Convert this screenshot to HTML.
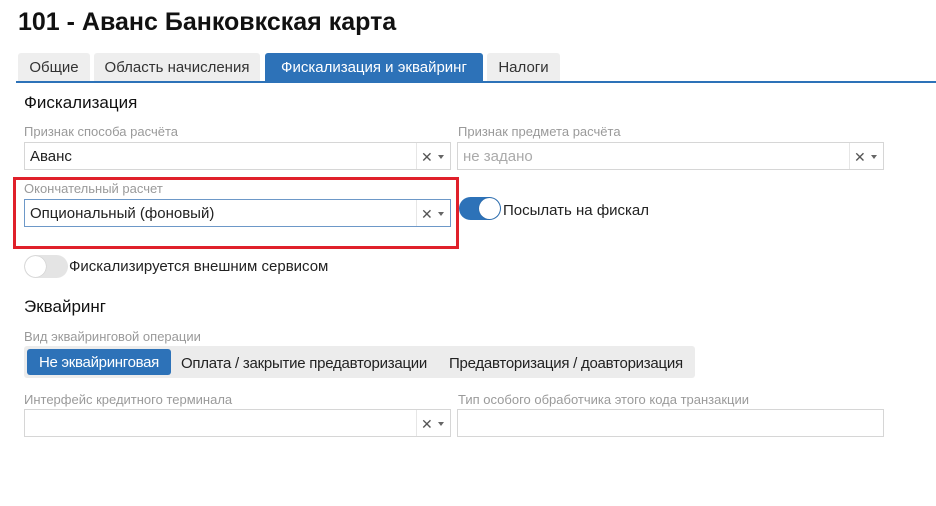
<!DOCTYPE html>
<html><head><meta charset="utf-8"><style>
*{box-sizing:border-box;margin:0;padding:0}
body{width:936px;height:506px;background:#fff;font-family:"Liberation Sans","DejaVu Sans",sans-serif;color:#222;position:relative;overflow:hidden}
.a{position:absolute;white-space:nowrap}
.tab{position:absolute;top:53px;height:29px;background:#eeeeee;font-size:15px;line-height:29px;text-align:center;color:#333;border-radius:3px 3px 0 0}
.lbl{position:absolute;font-size:13px;color:#9a9a9a}
.inp{position:absolute;height:28px;border:1px solid #d6d6d6;background:#fff;font-size:15px;line-height:28px;padding-left:5px}
.ic{position:absolute;right:0;top:0;width:34px;height:26px;border-left:1px solid #e6e6e6;font-size:14px;color:#555;line-height:26px}
.ic .x{position:absolute;left:4px;top:1px}
.ic .c{position:absolute;left:21px;top:12px;border:3px solid transparent;border-top:4px solid #666}
.tg{position:absolute;height:23px;border-radius:12px}
.tg .k{position:absolute;top:1px;width:21px;height:21px;border-radius:50%;background:#fff;box-shadow:0 0 1px rgba(0,0,0,.3)}
</style></head><body>
<div class="a" style="left:18px;top:8px;font-size:25px;font-weight:bold;color:#111">101 - Аванс Банковкская карта</div>
<div class="tab" style="left:18px;width:72px">Общие</div>
<div class="tab" style="left:94px;width:166px">Область начисления</div>
<div class="tab" style="left:265px;width:218px;background:#2d72b8;color:#fff">Фискализация и эквайринг</div>
<div class="tab" style="left:487px;width:73px">Налоги</div>
<div class="a" style="left:16px;top:81px;width:920px;height:2px;background:#2d72b8"></div>

<div class="a" style="left:24px;top:93px;font-size:17px;color:#111">Фискализация</div>
<div class="lbl" style="left:24px;top:124px">Признак способа расчёта</div>
<div class="inp" style="left:24px;top:142px;width:427px">Аванс<div class="ic"><span class="x">✕</span><span class="c"></span></div></div>
<div class="lbl" style="left:458px;top:124px">Признак предмета расчёта</div>
<div class="inp" style="left:457px;top:142px;width:427px;color:#aaa">не задано<div class="ic"><span class="x" style="color:#555">✕</span><span class="c"></span></div></div>

<div class="a" style="left:13px;top:177px;width:446px;height:72px;border:3px solid #e0202a"></div>
<div class="lbl" style="left:24px;top:181px">Окончательный расчет</div>
<div class="inp" style="left:24px;top:199px;width:427px;border-color:#6d98c8">Опциональный (фоновый)<div class="ic"><span class="x">✕</span><span class="c"></span></div></div>
<div class="tg" style="left:459px;top:197px;width:42px;background:#2d72b8"><div class="k" style="left:20px"></div></div>
<div class="a" style="left:503px;top:202px;font-size:15px">Посылать на фискал</div>
<div class="tg" style="left:24px;top:255px;width:44px;background:#e4e4e4"><div class="k" style="left:1px"></div></div>
<div class="a" style="left:69px;top:258px;font-size:15px">Фискализируется внешним сервисом</div>

<div class="a" style="left:24px;top:297px;font-size:17px;color:#111">Эквайринг</div>
<div class="lbl" style="left:24px;top:329px">Вид эквайринговой операции</div>
<div class="a" style="left:24px;top:346px;width:671px;height:32px;background:#ececec;border-radius:3px"></div>
<div class="a" style="left:27px;top:349px;width:144px;height:26px;background:#2d72b8;border-radius:3px;color:#fff;font-size:15px;line-height:28px;text-align:center;letter-spacing:-0.3px">Не эквайринговая</div>
<div class="a" style="left:181px;top:355px;font-size:15px;letter-spacing:-0.25px">Оплата / закрытие предавторизации</div>
<div class="a" style="left:449px;top:355px;font-size:15px;letter-spacing:-0.25px">Предавторизация / доавторизация</div>

<div class="lbl" style="left:24px;top:392px">Интерфейс кредитного терминала</div>
<div class="inp" style="left:24px;top:409px;width:427px"><div class="ic"><span class="x">✕</span><span class="c"></span></div></div>
<div class="lbl" style="left:458px;top:392px">Тип особого обработчика этого кода транзакции</div>
<div class="inp" style="left:457px;top:409px;width:427px"></div>
</body></html>
